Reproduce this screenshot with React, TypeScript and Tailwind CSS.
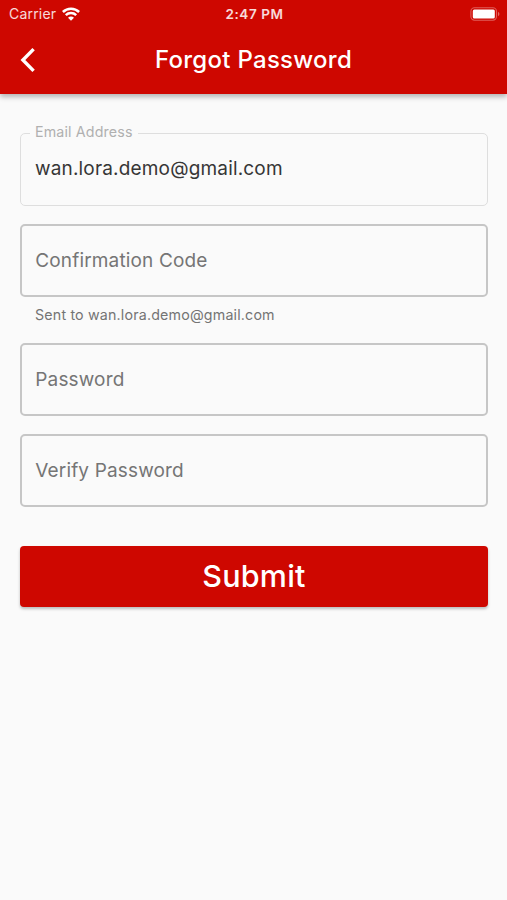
import { useState } from "react";

interface FieldProps {
  label: string;
  value: string;
  onChange: (value: string) => void;
  type?: string;
}

function Field({ label, value, onChange, type = "text" }: FieldProps) {
  return (
    <input
      type={type}
      value={value}
      placeholder={label}
      aria-label={label}
      onChange={(e) => onChange(e.target.value)}
      className="block h-[73px] w-full rounded-[5px] border-2 border-[#c6c6c6] bg-transparent px-[13.3px] text-[19px] tracking-[0.15px] text-[#2f2f2f] outline-none placeholder:text-[#757575]"
    />
  );
}

function StatusBar() {
  return (
    <div className="grid h-[27px] grid-cols-3 items-center pl-[9px] pr-[7px] text-[13.5px] leading-none">
      <div className="flex items-center gap-[6px]">
        <span className="text-[14px] tracking-[0.2px] text-white/85">Carrier</span>
        {/* Wifi */}
        <svg width="18" height="14" viewBox="0 0 18 14" fill="none" stroke="white" strokeWidth="2.5">
          <path d="M0.9 5C5.4 0.6 12.6 0.6 17.1 5" />
          <path d="M3.8 8.1C6.7 5.3 11.3 5.3 14.2 8.1" />
          <path d="M9 13.7L6 10.8C7.7 9.2 10.3 9.2 12 10.8Z" fill="white" stroke="none" />
        </svg>
      </div>
      <span className="pt-[2px] text-center text-[13.5px] font-semibold tracking-[0.55px] text-white/85">2:47 PM</span>
      {/* Battery */}
      <svg className="justify-self-end" width="30" height="14" viewBox="0 0 30 14">
        <rect x="0.9" y="0.8" width="25.6" height="12.4" rx="3.6" fill="none" stroke="white" strokeOpacity="0.35" strokeWidth="1.1" />
        <rect x="2.8" y="2.5" width="22" height="9" rx="1.5" fill="white" />
        <path d="M28 4.8C29.9 5.6 29.9 8.4 28 9.2Z" fill="white" fillOpacity="0.4" />
      </svg>
    </div>
  );
}

export default function App() {
  const [code, setCode] = useState("");
  const [password, setPassword] = useState("");
  const [verify, setVerify] = useState("");

  return (
    <div className="flex h-[900px] w-[507px] flex-col overflow-hidden bg-[#fafafa] font-['Inter',sans-serif]">
      <header className="h-[94px] shrink-0 bg-[#ce0700] text-white shadow-[0_3px_5px_rgba(0,0,0,0.28)]">
        <StatusBar />
        <div className="grid h-[65px] grid-cols-[56px_1fr_56px] items-center">
          <button aria-label="Back" className="pl-[20px]">
            <svg width="16" height="26" viewBox="0 0 16 26" fill="none" stroke="white" strokeWidth="3.4">
              <path d="M13.6 2.1L2.9 13L13.6 23.9" />
            </svg>
          </button>
          <h1 className="whitespace-nowrap pt-px text-center text-[24px] font-medium leading-none tracking-[0.28px]">Forgot Password</h1>
        </div>
      </header>

      <form className="flex flex-col pl-[20px] pr-[19px] pt-[31px]" onSubmit={(e) => e.preventDefault()}>
        {/* Outlined field with its label in the border */}
        <fieldset className="h-[81px] rounded-[5px] border border-[#dedede] pl-[9px]">
          <legend className="h-[16px] whitespace-nowrap px-[5px] text-[14.25px] leading-[14px] tracking-[0.15px] text-[#b0b0b0]">
            Email Address
          </legend>
          <div className="pl-[5px] pt-[16px] text-[19px] leading-[24px] tracking-[0.17px] text-[#363636]">wan.lora.demo@gmail.com</div>
        </fieldset>

        <div className="mt-[18px]">
          <Field label="Confirmation Code" value={code} onChange={setCode} />
          <p className="mt-[9px] pl-[15px] text-[14.25px] leading-[18px] tracking-[0.17px] text-[#747474]">
            Sent to wan.lora.demo@gmail.com
          </p>
        </div>

        <div className="mt-[19px] flex flex-col gap-[18px]">
          <Field label="Password" type="password" value={password} onChange={setPassword} />
          <Field label="Verify Password" type="password" value={verify} onChange={setVerify} />
        </div>

        <button
          type="submit"
          className="mt-[39px] h-[61px] rounded-[4px] bg-[#ce0700] text-[30.5px] font-medium leading-none tracking-[0.2px] text-white shadow-[0_2px_3px_rgba(0,0,0,0.25)]"
        >
          Submit
        </button>
      </form>
    </div>
  );
}
